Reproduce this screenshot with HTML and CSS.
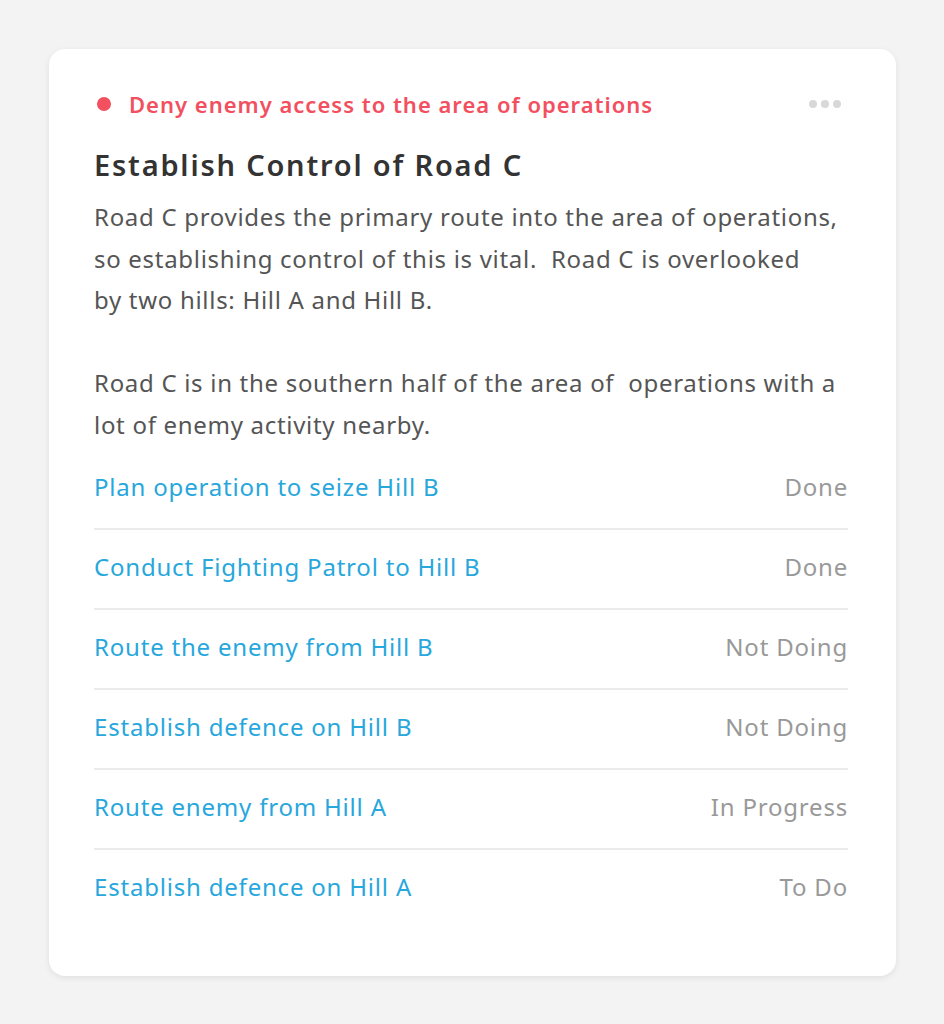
FILE: index.html
```html
<!DOCTYPE html>
<html lang="en">
<head>
    <meta charset="UTF-8">
    <meta name="viewport" content="width=device-width, initial-scale=1.0">
    <title>Objective</title>
    <link rel="stylesheet" href="styles.css">
</head>

<body>

    <section class="card">
        <div class="card_head">
            <span class="dot"></span>
            <span class="goal">Deny enemy access to the area of operations</span>
            <span class="more">
                <i></i><i></i><i></i>
            </span>
        </div>
        <h1 class="title">Establish Control of Road C</h1>
        <p class="desc">
            Road C provides the primary route into the area of operations, so establishing control of this is vital.&nbsp; Road C is overlooked by&nbsp;two hills: Hill A and Hill B.
            <br><br>
            Road C is in the southern half of the area of&nbsp; operations with a lot of enemy activity nearby.
        </p>
        <ul class="tasks">
            <li class="task"><a href="#">Plan operation to seize Hill B</a><span class="status">Done</span></li>
            <li class="task"><a href="#">Conduct Fighting Patrol to Hill B</a><span class="status">Done</span></li>
            <li class="task"><a href="#">Route the enemy from Hill B</a><span class="status">Not Doing</span></li>
            <li class="task"><a href="#">Establish defence on Hill B</a><span class="status">Not Doing</span></li>
            <li class="task"><a href="#">Route enemy from Hill A</a><span class="status">In Progress</span></li>
            <li class="task"><a href="#">Establish defence on Hill A</a><span class="status">To Do</span></li>
        </ul>
    </section>

</body>

</html>
```

FILE: styles.css
```css
body {
    margin: 0;
    background-color: #f3f3f3;
    font-family: "Noto Sans", "Open Sans", sans-serif;
    padding: 49px 48px 48px 49px;
}

.card {
    background-color: #fff;
    border-radius: 16px;
    box-shadow: 0 2px 6px rgba(0, 0, 0, 0.08);
    padding: 40px 48px 49px 45px;
    height: 927px;
    box-sizing: border-box;
}

.card_head {
    display: flex;
    align-items: center;
    height: 30px;
}

.dot {
    width: 14px;
    height: 14px;
    border-radius: 50%;
    background-color: #f2505f;
    margin: 0 18px 0 3px;
}

.goal {
    color: #f2505f;
    font-size: 22px;
    font-weight: 600;
    letter-spacing: 1px;
    flex: 1;
}

.more {
    display: flex;
    gap: 4px;
    margin-right: 7px;
}

.more i {
    width: 8px;
    height: 8px;
    border-radius: 50%;
    background-color: #d8d8d8;
}

.title {
    margin: 28px 0 0;
    font-size: 29px;
    line-height: 36px;
    font-weight: 600;
    letter-spacing: 1.8px;
    color: #333;
}

.desc {
    margin: 13px 8px 0 0;
    font-size: 24px;
    line-height: 41.5px;
    letter-spacing: 0.7px;
    color: #555;
}

.tasks {
    list-style: none;
    padding: 0;
    margin: 5px 0 0;
}

.task {
    display: flex;
    justify-content: space-between;
    padding: 17px 0 21px;
    line-height: 40px;
    font-size: 24px;
    letter-spacing: 0.8px;
    border-bottom: 2px solid #ebebeb;
}

.task:last-child {
    border-bottom: none;
}

.task a {
    color: #28a7dc;
    text-decoration: none;
}

.status {
    color: #999;
}
```
